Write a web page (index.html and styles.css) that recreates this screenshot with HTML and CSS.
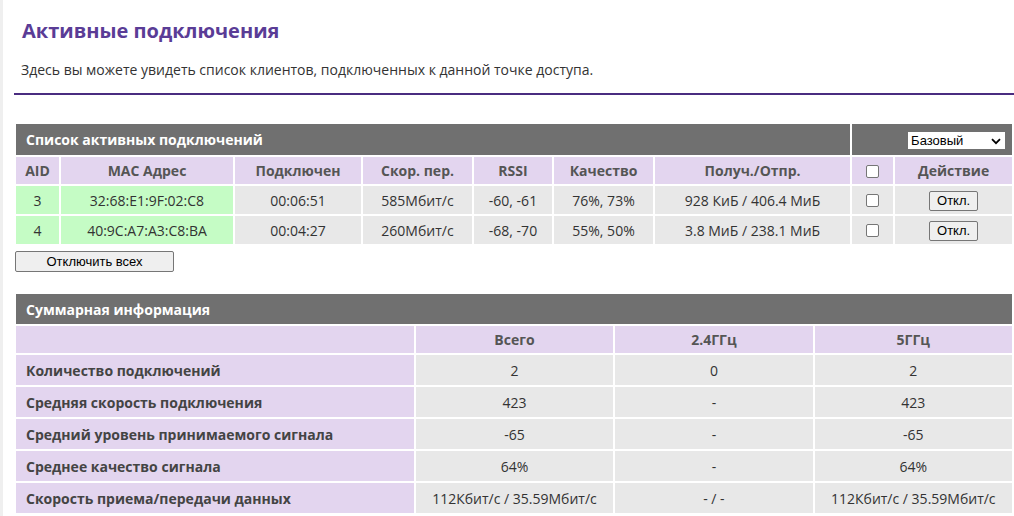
FILE: index.html
```html
<!DOCTYPE html>
<html lang="ru">
<head>
<meta charset="utf-8">
<title>Активные подключения</title>
<link rel="stylesheet" href="styles.css">
</head>
<body>
<div class="page">
  <div class="intro">
    <h1 class="title">Активные подключения</h1>
    <p class="desc">Здесь вы можете увидеть список клиентов, подключенных к данной точке доступа.</p>
  </div>
  <hr class="rule">

  <table class="grid clients">
    <colgroup>
      <col class="c-aid"><col class="c-mac"><col class="c-time"><col class="c-rate"><col class="c-rssi"><col class="c-q"><col class="c-rx"><col class="c-chk"><col class="c-act">
    </colgroup>
    <tr class="bar">
      <td colspan="7" class="bar-title">Список активных подключений</td>
      <td colspan="2" class="bar-tools">
        <span class="select-wrap">
          <select class="mode"><option>Базовый</option></select>
          <svg class="chev" width="10" height="7" viewBox="0 0 10 7"><path d="M1 1.2 L5 5.2 L9 1.2" fill="none" stroke="#000" stroke-width="1.8"/></svg>
        </span>
      </td>
    </tr>
    <tr class="head">
      <th>AID</th>
      <th>MAC Адрес</th>
      <th>Подключен</th>
      <th>Скор. пер.</th>
      <th>RSSI</th>
      <th>Качество</th>
      <th>Получ./Отпр.</th>
      <th><span class="chk"></span></th>
      <th>Действие</th>
    </tr>
    <tr class="row">
      <td class="ok">3</td>
      <td class="ok">32:68:E1:9F:02:C8</td>
      <td>00:06:51</td>
      <td>585Мбит/с</td>
      <td>-60, -61</td>
      <td>76%, 73%</td>
      <td>928 КиБ / 406.4 МиБ</td>
      <td><span class="chk"></span></td>
      <td><button class="btn btn-small">Откл.</button></td>
    </tr>
    <tr class="row">
      <td class="ok">4</td>
      <td class="ok">40:9C:A7:A3:C8:BA</td>
      <td>00:04:27</td>
      <td>260Мбит/с</td>
      <td>-68, -70</td>
      <td>55%, 50%</td>
      <td>3.8 МиБ / 238.1 МиБ</td>
      <td><span class="chk"></span></td>
      <td><button class="btn btn-small">Откл.</button></td>
    </tr>
  </table>

  <button class="btn btn-all">Отключить всех</button>

  <table class="grid summary">
    <colgroup>
      <col class="s-first"><col class="s-col"><col class="s-col"><col class="s-col">
    </colgroup>
    <tr class="bar">
      <td colspan="4" class="bar-title">Суммарная информация</td>
    </tr>
    <tr class="head">
      <th></th>
      <th>Всего</th>
      <th>2.4ГГц</th>
      <th>5ГГц</th>
    </tr>
    <tr class="srow">
      <th class="s-label">Количество подключений</th>
      <td>2</td><td>0</td><td>2</td>
    </tr>
    <tr class="srow">
      <th class="s-label">Средняя скорость подключения</th>
      <td>423</td><td>-</td><td>423</td>
    </tr>
    <tr class="srow">
      <th class="s-label">Средний уровень принимаемого сигнала</th>
      <td>-65</td><td>-</td><td>-65</td>
    </tr>
    <tr class="srow">
      <th class="s-label">Среднее качество сигнала</th>
      <td>64%</td><td>-</td><td>64%</td>
    </tr>
    <tr class="srow">
      <th class="s-label">Скорость приема/передачи данных</th>
      <td>112Кбит/с / 35.59Мбит/с</td><td>- / -</td><td>112Кбит/с / 35.59Мбит/с</td>
    </tr>
  </table>
</div>
</body>
</html>
```

FILE: styles.css
```css
html, body {
  margin: 0;
  padding: 0;
  background: #fff;
}
body {
  font-family: "Open Sans", "Noto Sans", sans-serif;
  font-size: 14px;
  color: #333;
}
.page {
  border-left: 3px solid #efefef;
  padding-left: 11px;
  min-height: 516px;
  box-sizing: border-box;
}
.intro {
  padding: 16px 0 0 7px;
}
.title {
  margin: 0;
  font-size: 20px;
  font-weight: 700;
  color: #5a3c96;
  line-height: 30px;
  padding-left: 1px;
}
.desc {
  margin: 14px 0 0 0;
  line-height: 20px;
  color: #333;
}
.rule {
  margin: 13px 0 0 0;
  border: 0;
  height: 2px;
  background: #4a2c80;
}
.grid {
  width: 100%;
  border-collapse: separate;
  border-spacing: 2px;
  table-layout: fixed;
}
.clients {
  margin-top: 27px;
}
.grid td, .grid th {
  padding: 0;
  text-align: center;
  font-size: 14px;
  white-space: nowrap;
}
.bar td {
  background: #707070;
  height: 31px;
  color: #fff;
}
.bar-title {
  text-align: left !important;
  padding-left: 10px !important;
  font-weight: 700;
}
.bar-tools {
  text-align: right !important;
  padding-right: 7px !important;
}
.select-wrap {
  position: relative;
  display: inline-block;
  vertical-align: middle;
}
.mode {
  appearance: none;
  -webkit-appearance: none;
  border: 0;
  border-radius: 0;
  background: #fff;
  width: 97px;
  height: 17px;
  padding: 0 0 0 3px;
  margin: 0;
  font-family: "Liberation Sans", Arial, sans-serif;
  font-size: 13px;
  color: #000;
  display: block;
}
.chev {
  position: absolute;
  right: 4px;
  top: 6px;
  pointer-events: none;
}
.head th {
  background: #e3d5ef;
  height: 27px;
  font-weight: 700;
  color: #555;
}
.row td {
  background: #e8e8e8;
  height: 28px;
}
.row td.ok {
  background: #c5fcc5;
}
.c-aid { width: 43px; }
.c-mac { width: 172px; }
.c-time { width: 126px; }
.c-rate { width: 109px; }
.c-rssi { width: 78px; }
.c-q { width: 99px; }
.c-rx { width: 195px; }
.c-chk { width: 41px; }
.c-act { width: 117px; }
.chk {
  display: inline-block;
  width: 11px;
  height: 11px;
  border: 1px solid #767676;
  border-radius: 2px;
  background: #fff;
  vertical-align: middle;
  position: relative;
  top: -1px;
}
.btn {
  font-family: "Liberation Sans", Arial, sans-serif;
  font-size: 13px;
  color: #000;
  background: #efefef;
  border: 1px solid #767676;
  border-radius: 2px;
  padding: 0;
  margin: 0;
}
.btn-small {
  width: 49px;
  height: 20px;
  vertical-align: middle;
}
.btn-all {
  display: block;
  width: 159px;
  height: 21px;
  margin: 5px 0 0 1px;
}
.summary {
  margin-top: 20px;
}
.s-first { width: 397px; }
.s-col { width: 197px; }
.summary .bar td {
  height: 30px;
}
.summary .head th {
  height: 27px;
}
.srow th.s-label {
  background: #e3d5ef;
  text-align: left;
  padding-left: 10px;
  font-weight: 700;
  color: #444;
  height: 30px;
}
.srow td {
  background: #e8e8e8;
  height: 30px;
}
```
